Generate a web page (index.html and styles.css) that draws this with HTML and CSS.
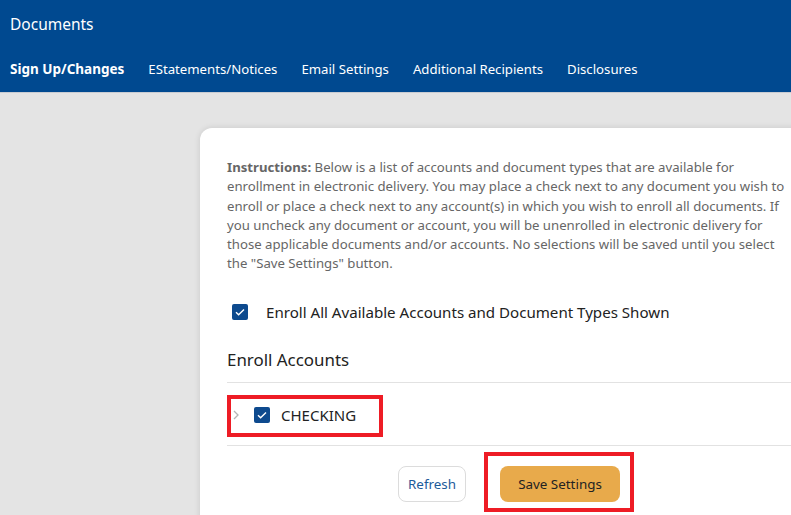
FILE: index.html
```html
<!DOCTYPE html>
<html lang="en">
<head>
  <meta charset="UTF-8" />
  <title>Documents</title>
  <link rel="stylesheet" href="styles.css">
</head>
<body>
  <header class="topbar">
    <div class="title">Documents</div>
    <nav class="tabs">
      <a class="tab active">Sign Up/Changes</a>
      <a class="tab">EStatements/Notices</a>
      <a class="tab">Email Settings</a>
      <a class="tab">Additional Recipients</a>
      <a class="tab">Disclosures</a>
    </nav>
  </header>

  <main class="page">
    <section class="card">
      <p class="instructions">
        <b>Instructions:</b> Below is a list of accounts and document types that are available for
        enrollment in electronic delivery. You may place a check next to any document you wish to
        enroll or place a check next to any account(s) in which you wish to enroll all documents. If
        you uncheck any document or account, you will be unenrolled in electronic delivery for
        those applicable documents and/or accounts. No selections will be saved until you select
        the "Save Settings" button.
      </p>

      <label class="enroll-all">
        <span class="check"><svg viewBox="0 0 16 16"><path d="M4 8.3l2.6 2.5L12 5.4" /></svg></span>
        Enroll All Available Accounts and Document Types Shown
      </label>

      <h2 class="section-title">Enroll Accounts</h2>

      <div class="account-list">
        <div class="account-row">
          <span class="highlight">
            <svg class="chevron" viewBox="0 0 8 12"><path d="M2 2l4 4-4 4" /></svg>
            <span class="check"><svg viewBox="0 0 16 16"><path d="M4 8.3l2.6 2.5L12 5.4" /></svg></span>
            <span class="account-name">CHECKING</span>
          </span>
        </div>
      </div>

      <div class="actions">
        <button class="btn btn-light">Refresh</button>
        <span class="highlight highlight-btn">
          <button class="btn btn-save">Save Settings</button>
        </span>
      </div>
    </section>
  </main>
</body>
</html>
```

FILE: styles.css
```css
* { box-sizing: border-box; }

html, body {
  margin: 0;
  height: 100%;
  overflow: hidden;
}

body {
  font-family: "Noto Sans", "Open Sans", sans-serif;
  background: #e4e4e4;
  color: #222;
}

.topbar {
  background: #004990;
  color: #fff;
  height: 93px;
  border-bottom: 1px solid #c9ccd2;
}

.title {
  font-size: 15.5px;
  padding: 13px 10px 0;
  height: 60px;
}

.tabs {
  display: flex;
  gap: 24px;
  padding-left: 10px;
  font-size: 13.2px;
}

.tab {
  color: #fff;
  text-decoration: none;
}

.tab.active {
  font-weight: 700;
  font-size: 13.5px;
}

.page {
  padding: 35px 0 0 200px;
}

.card {
  width: 640px;
  min-height: 420px;
  background: #fff;
  border-radius: 12px;
  box-shadow: 0 0 6px rgba(0,0,0,0.12);
  padding: 30px 0 0 27px;
}

.instructions {
  margin: 0;
  width: 560px;
  font-size: 13.2px;
  line-height: 19.3px;
  color: #666;
}

.instructions b {
  color: #666;
}

.enroll-all {
  display: flex;
  align-items: center;
  gap: 18px;
  margin: 28px 0 0 5px;
  font-size: 15.1px;
  color: #222;
}

.check {
  display: inline-flex;
  width: 16px;
  height: 16px;
  background: #0d4a8e;
  border-radius: 2px;
}

.check svg {
  width: 16px;
  height: 16px;
  fill: none;
  stroke: #fff;
  stroke-width: 1.4;
}

.section-title {
  margin: 26px 0 0;
  font-size: 16.9px;
  font-weight: 400;
  color: #222;
  padding-bottom: 11px;
  border-bottom: 1px solid #e2e2e2;
}

.account-row {
  display: flex;
  padding: 12px 0 8px;
  border-bottom: 1px solid #e2e2e2;
}

.highlight {
  display: inline-flex;
  align-items: center;
  border: 4px solid #ee1c25;
}

.account-row .highlight {
  width: 156px;
  height: 42px;
  padding-left: 1px;
  padding-bottom: 2px;
}

.chevron {
  width: 8px;
  height: 12px;
  fill: none;
  stroke: #b5b5b5;
  stroke-width: 1.3;
  margin-right: 14px;
}

.account-name {
  margin-left: 11px;
  font-size: 15px;
  color: #222;
}

.actions {
  display: flex;
  align-items: flex-end;
  margin-top: 6px;
  padding-left: 171px;
}

.btn {
  font-family: inherit;
  font-size: 13.4px;
  height: 36px;
  border-radius: 8px;
  cursor: pointer;
}

.btn-light {
  width: 68px;
  margin-bottom: 10px;
  background: #fff;
  border: 1px solid #dcdcdc;
  color: #1d5b9a;
}

.highlight-btn {
  margin-left: 18px;
  padding: 10px 10px 6px 12px;
}

.btn-save {
  width: 120px;
  background: #e8aa4b;
  border: none;
  color: #222;
}
```
